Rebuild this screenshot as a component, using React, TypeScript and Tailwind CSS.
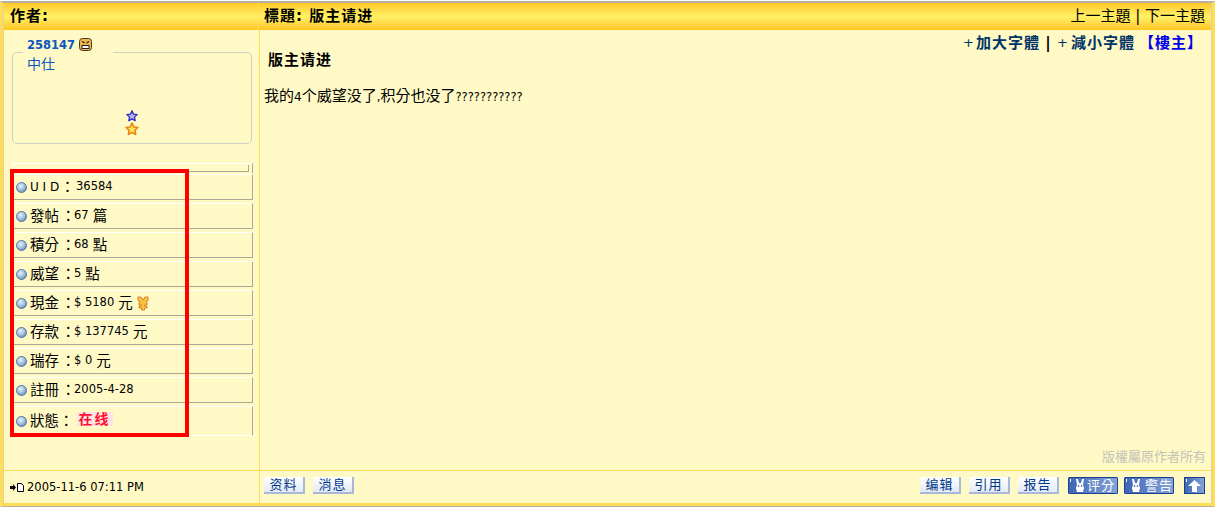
const STATS = [
  { label: "U I D", value: "36584", uid: true },
  { label: "發帖", value: "67", unit: "篇" },
  { label: "積分", value: "68", unit: "點" },
  { label: "威望", value: "5", unit: "點" },
  { label: "現金", value: "$ 5180", unit: "元", coin: true },
  { label: "存款", value: "$ 137745", unit: "元" },
  { label: "瑞存", value: "$ 0", unit: "元" },
  { label: "註冊", value: "2005-4-28" },
];

const FONT = "font-['DejaVu_Sans','Noto_Sans_CJK_TC',sans-serif]";

function Bullet() {
  return (
    <svg width="11" height="11" viewBox="0 0 11 11" className="shrink-0">
      <defs>
        <radialGradient id="ball" cx="40%" cy="35%" r="70%">
          <stop offset="0%" stopColor="#e8f1fa" />
          <stop offset="60%" stopColor="#9dbbdb" />
          <stop offset="100%" stopColor="#5d83ac" />
        </radialGradient>
      </defs>
      <circle cx="5.5" cy="5.5" r="5" fill="url(#ball)" stroke="#557ba3" />
    </svg>
  );
}

function Star({ fill, stroke, size }: { fill: string; stroke: string; size: number }) {
  return (
    <svg width={size} height={size} viewBox="0 0 14 14" className="block">
      <path
        d="M7 1l1.8 3.9 4.2.5-3.1 2.9.8 4.2L7 10.4 3.3 12.5l.8-4.2L1 5.4l4.2-.5z"
        fill={fill}
        stroke={stroke}
        strokeWidth="1.5"
        strokeLinejoin="round"
      />
    </svg>
  );
}

function AngryFace() {
  return (
    <svg width="13" height="13" viewBox="0 0 13 13" className="shrink-0">
      <rect x="0.5" y="0.5" width="12" height="12" rx="3" fill="#f2b64a" stroke="#4a3a20" />
      <path d="M3 3.500l2.500 1.500M10 3.500L7.500 5" stroke="#222" strokeWidth="1.2" />
      <rect x="3" y="7.500" width="7" height="3" fill="#fff" stroke="#222" strokeWidth="1" />
    </svg>
  );
}

function Coin() {
  return (
    <svg width="12" height="15" viewBox="0 0 12 15" className="shrink-0">
      <path
        d="M1 1h3l2 3 2-3h3v3L9 7h1v2H7.500v1H10v2H7.500v2h-3v-2H2v-2h2.500V9H2V7h1L1 4z"
        fill="#f7c33c"
        stroke="#d9822b"
      />
    </svg>
  );
}

function PostIcon() {
  return (
    <svg width="15" height="9" viewBox="0 0 15 9" className="shrink-0">
      <path d="M0 3h3V1l3 3.500L3 8V6H0z" fill="#000" />
      <path d="M7.500 .5h3.500l2.500 2v6h-6z" fill="#fff" stroke="#000" />
    </svg>
  );
}

function LightButton({ text }: { text: string }) {
  return (
    <span className="flex h-[17px] w-[41px] items-center justify-center border-r-2 border-b-2 border-[#a9b8d8] bg-gradient-to-b from-white to-[#e4e9f6] text-[13px] tracking-[1px] text-[#003a8c]">
      {text}
    </span>
  );
}

function Tick() {
  return <span className="absolute left-[1px] top-[1px] h-[3px] w-[1px] bg-white" />;
}

function DarkButton({ text, gap }: { text: string; gap: string }) {
  return (
    <span className={`relative flex h-[17px] w-[50px] items-center rounded-[1px] border border-[#1c3f94] bg-gradient-to-r from-[#3f66b4] to-[#86a3d8] pl-[6px] text-[13px] leading-none tracking-[1px] text-white ${gap}`}>
      <Tick />
      <svg width="10" height="14" viewBox="0 0 10 14" className="shrink-0">
        <path d="M1 0h2l1 4h2l1-4h2L8 6l1 3-1 4H2L1 9l1-3z" fill="#fff" />
        <circle cx="3.500" cy="7" r="0.800" fill="#1c3f94" />
        <circle cx="6.500" cy="7" r="0.800" fill="#1c3f94" />
      </svg>
      {text}
    </span>
  );
}

export default function App() {
  return (
    <div className={`relative h-[507px] w-[1215px] overflow-hidden bg-white pt-[1px] ${FONT}`}>
      <div className="h-[506px] border-x-[3px] border-t-2 border-b-[1px] border-x-[#ffdd55] border-t-[#b4b0a4] border-b-[#b4b0a4]">
        <div className="flex h-full flex-col border-x border-b-[3px] border-x-[#d8d2a8] border-b-[#ffdd55] bg-[#fff9c6]">
          {/* header */}
          <div className="flex h-[27px] shrink-0 items-center bg-gradient-to-b from-[#ffc91f] via-[#fff066] to-[#ffc61a] text-[15px] font-bold leading-none tracking-[1px] text-black">
            <div className="w-[255px] border-r border-[#ffdd55] pl-[6px] leading-[27px]">作者:</div>
            <div className="flex flex-1 items-center justify-between pl-[5px] pr-[6px]">
              <span>標題: 版主请进</span>
              <span className="font-normal tracking-normal">上一主題 | 下一主題</span>
            </div>
          </div>

          {/* body */}
          <div className="flex min-h-0 flex-1">
            <div className="w-[256px] shrink-0 border-r border-[#ffdd55] pl-[8px] pr-[6px]">
              <fieldset className="mt-[7px] h-[107px] w-[240px] rounded-[5px] border border-[#cfcfc4] pl-[10px]">
                <legend className="flex h-[30px] items-start gap-[4px] pl-[4px] pr-[21px] pt-[1px] text-[11.5px] font-bold leading-[14px] text-[#0a56c2]">
                  258147
                  <AngryFace />
                </legend>
                <div className="-mt-[11px] ml-[4px] text-[14px] leading-[16px] text-[#0a56c2]">中仕</div>
                <div className="mt-[38px] flex flex-col items-center pr-[11px]">
                  <Star fill="#b7b4f2" stroke="#2a2ac0" size={12} />
                  <Star fill="#ffe45a" stroke="#e8820c" size={14} />
                </div>
              </fieldset>

              <div className="mt-[19px] w-[241px]">
                <div className="mb-[1px] h-[10px] border-x border-t border-l-white border-r-[#aca899] border-t-white pt-[1px]">
                  <div className="mx-[3px] h-[7px] border-r border-b border-r-[#aca899] border-b-[#aca899]" />
                </div>
                {STATS.map((s) => (
                  <div
                    key={s.label}
                    className="mb-[3px] flex h-[26px] items-center border border-t-white border-l-white border-r-[#aca899] border-b-[#aca899] pl-[3px] text-[11.5px] leading-none text-black"
                  >
                    <Bullet />
                    <span className="ml-[3px] flex w-[44px] shrink-0 items-center whitespace-pre text-[14.5px]">
                      <span className={s.uid ? "text-[12px]" : ""}>{s.label}</span>
                      <span className={s.uid ? "ml-[1px]" : "ml-[2px]"}>：</span>
                    </span>
                    <span className={`whitespace-pre ${s.uid ? "ml-[2px]" : ""}`}>{s.value}</span>
                    {s.unit && <span className="ml-[4px] text-[14.5px]">{s.unit}</span>}
                    {s.coin && (
                      <span className="ml-[4px]">
                        <Coin />
                      </span>
                    )}
                  </div>
                ))}
                <div className="flex h-[30px] items-center border-t border-r border-b border-t-white border-r-[#aca899] border-b-white pl-[4px] text-[14.5px] leading-none text-black">
                  <Bullet />
                  <span className="ml-[3px] whitespace-pre">狀態：</span>
                  <span className="-mt-[5px] ml-[3px] bg-[#ffe4e4] px-[2px] text-[14px] font-bold tracking-[2px] text-[#ff1030]">在线</span>
                </div>
              </div>
            </div>

            <div className="relative min-w-0 flex-1">
              <div className="flex justify-end pr-[8px] pt-[5px] text-[15px] font-bold leading-[16px] tracking-[1px] text-[#003366]">
                <span className="w-[13px] text-[13px] font-normal">+</span>
                <span>加大字體</span>
                <span className="w-[17px] text-center text-black">|</span>
                <span className="w-[14px] text-[13px] font-normal">+</span>
                <span>減小字體</span>
                <span className="ml-[4px] text-[#0000ee]">【樓主】</span>
              </div>
              <div className="pl-[8px] text-[15px] font-bold leading-[18px] tracking-[1px] text-black">版主请进</div>
              <p className="ml-[4px] mt-[19px] text-[15px] leading-[16px] text-black">
                我的<span className="text-[12px]">4</span>个威望没了<span className="text-[12px]">,</span>积分也没了<span className="text-[11.5px]">???????????</span>
              </p>
              <div className="absolute bottom-[5px] right-[5px] text-[13px] leading-[16px] text-[#c4c4b8]">版權屬原作者所有</div>
            </div>
          </div>

          {/* footer */}
          <div className="flex h-[33px] shrink-0 border-t border-[#ffdd55]">
            <div className="flex w-[256px] shrink-0 items-center gap-[2px] border-r border-[#ffdd55] pl-[6px] pt-[1px] text-[11.5px] leading-none text-black">
              <PostIcon />
              2005-11-6 07:11 PM
            </div>
            <div className="flex flex-1 items-center pb-[3px] pl-[4px] pr-[6px]">
              <div className="flex gap-[8px]">
                <LightButton text="资料" />
                <LightButton text="消息" />
              </div>
              <div className="ml-auto flex items-center">
                <div className="flex gap-[8px]">
                  <LightButton text="编辑" />
                  <LightButton text="引用" />
                  <LightButton text="报告" />
                </div>
                <div className="ml-[9px] flex gap-[6px]">
                  <DarkButton text="评分" gap="gap-[2px]" />
                  <DarkButton text="警告" gap="gap-[4px]" />
                </div>
                <span className="relative ml-[10px] flex h-[17px] w-[21px] items-center justify-center border border-[#1c3f94] bg-gradient-to-r from-[#3f66b4] to-[#86a3d8]">
                  <Tick />
                  <svg width="13" height="12" viewBox="0 0 13 12">
                    <path d="M6.500 0L13 6H9v6H4V6H0z" fill="#fff" />
                  </svg>
                </span>
              </div>
            </div>
          </div>
        </div>
      </div>

      {/* red highlight drawn over the stats */}
      <div className="absolute left-[10px] top-[169px] h-[268px] w-[179px] border-4 border-[#ff0000]" />
    </div>
  );
}
